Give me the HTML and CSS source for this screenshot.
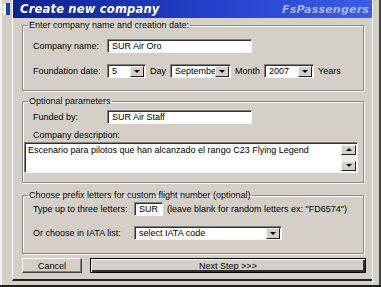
FILE: index.html
```html
<!DOCTYPE html>
<html>
<head>
<meta charset="utf-8">
<link rel="stylesheet" href="styles.css">
</head>
<body>
<div class="screen">
  <div class="side-left">
    <div class="app-icon"></div>
  </div>
  <div class="dialog">
    <div class="titlebar">
      <span class="title">Create new company</span>
      <span class="brand">FsPassengers</span>
    </div>
    <div class="body">
      <fieldset class="group g1">
        <legend>Enter company name and creation date:</legend>
        <div class="row r1">
          <span class="label w74">Company name:</span>
          <span class="input w145">SUR Air Oro</span>
        </div>
        <div class="row r2">
          <span class="label w74">Foundation date:</span>
          <span class="select w39"><span class="val">5</span><span class="arrow"></span></span>
          <span class="word">Day</span>
          <span class="select w61"><span class="val">Septembe</span><span class="arrow"></span></span>
          <span class="word">Month</span>
          <span class="select w50"><span class="val">2007</span><span class="arrow"></span></span>
          <span class="word">Years</span>
        </div>
      </fieldset>
      <fieldset class="group g2">
        <legend>Optional parameters</legend>
        <div class="row r3">
          <span class="label w74">Funded by:</span>
          <span class="input w145">SUR Air Staff</span>
        </div>
        <div class="row r4"><span class="label">Company description:</span></div>
        <div class="textarea">
          <span class="ta-text">Escenario para pilotos que han alcanzado el rango C23 Flying Legend</span>
          <span class="scroll">
            <span class="sbtn up"></span>
            <span class="sbtn down"></span>
          </span>
        </div>
      </fieldset>
      <fieldset class="group g3">
        <legend>Choose prefix letters for custom flight number (optional)</legend>
        <div class="row r5">
          <span class="label w101">Type up to three letters:</span>
          <span class="input w29">SUR</span>
          <span class="word">(leave blank for random letters ex: "FD6574")</span>
        </div>
        <div class="row r6">
          <span class="label w101">Or choose in IATA list:</span>
          <span class="select w148"><span class="val">select IATA code</span><span class="arrow"></span></span>
        </div>
      </fieldset>
      <div class="buttons">
        <span class="btn cancel">Cancel</span>
        <span class="btn next">Next Step &gt;&gt;&gt;</span>
      </div>
    </div>
  </div>
  <div class="side-right"></div>
</div>
</body>
</html>
```
FILE: styles.css
```css
* { box-sizing: border-box; }
html, body { margin: 0; padding: 0; background: #d4d0c8; }
.screen {
  width: 381px;
  height: 287px;
  display: flex;
  overflow: hidden;
  background: #d4d0c8;
  font-family: "Liberation Sans", Arial, sans-serif;
  font-size: 9px;
  color: #000;
  border-bottom: 2px solid #202020;
}
.side-left {
  width: 12px;
  border-left: 2px solid #f4f4f0;
  position: relative;
}
.app-icon {
  margin: 3px 0 0 1px;
  width: 7px;
  height: 12px;
  background: linear-gradient(to right, #f4f4f4 0 3px, #1f3fa8 3px);
  border-radius: 3px 0 0 3px;
}
.side-right {
  width: 9px;
  border-left: 1px solid #f4f4f0;
  border-right: 2px solid #404040;
  background: #d4d0c8;
}
.dialog {
  flex: 1;
  display: flex;
  flex-direction: column;
  border-left: 1px solid #ffffff;
  border-bottom: 2px solid #202020;
  margin-bottom: 4px;
}
.titlebar {
  height: 18px;
  flex: none;
  display: flex;
  align-items: center;
  justify-content: space-between;
  padding: 0 3px 0 7px;
  background: linear-gradient(to right, #0c2290 0%, #2540c8 55%, #3b5fe6 100%);
  font-family: "DejaVu Sans", sans-serif;
  font-weight: bold;
  font-style: italic;
  font-size: 11.5px;
  letter-spacing: 0.2px;
}
.title { color: #ffffff; }
.brand { color: #a3b3e4; font-size: 11px; }
.body {
  flex: 1;
  padding: 1px 8px 0 9px;
  display: flex;
  flex-direction: column;
}
.group {
  margin: 0;
  padding: 0 5px 0 10px;
  border: 1px solid #8c8a84;
  box-shadow: inset 1px 1px 0 #fbfbf8, 1px 1px 0 #fbfbf8;
  min-width: 0;
}
.group legend {
  padding: 0 1px;
  margin-left: -5px;
  line-height: 12px;
}
.g1 { padding-bottom: 12px; }
.g2 { margin-top: 4px; padding-bottom: 9px; }
.g3 { margin-top: 6px; padding-bottom: 13px; }
.row { display: flex; align-items: center; height: 14px; }
.r1 { margin-top: 8px; }
.r2 { margin-top: 11px; }
.r3 { margin-top: 3px; }
.r4 { margin-top: 5px; height: 12px; }
.r5 { margin-top: 1px; }
.r6 { margin-top: 10px; }
.label { flex: none; }
.w74 { width: 74px; }
.w101 { width: 101px; }
.word { margin: 0 4px; }
.input, .select {
  height: 14px;
  background: #fff;
  border: 1px solid;
  border-color: #808080 #f8f8f8 #f8f8f8 #808080;
  box-shadow: inset 1px 1px 0 #303030;
  padding: 1px 0 0 4px;
  line-height: 11px;
  flex: none;
}
.select { display: flex; padding-right: 1px; }
.select .val { flex: 1; overflow: hidden; white-space: nowrap; }
.select .arrow {
  width: 14px;
  height: 11px;
  background: #d4d0c8;
  border: 1px solid;
  border-color: #f4f4f4 #202020 #202020 #f4f4f4;
  position: relative;
}
.select .arrow::after, .sbtn::after {
  content: "";
  position: absolute;
  left: 50%;
  top: 50%;
  margin: -2px 0 0 -3px;
  border-left: 3px solid transparent;
  border-right: 3px solid transparent;
  border-top: 3px solid #000;
}
.w145 { width: 145px; }
.w39 { width: 39px; }
.w61 { width: 61px; }
.w50 { width: 50px; }
.w29 { width: 29px; }
.w148 { width: 148px; }
.textarea {
  margin: 1px 0 0 -9px;
  height: 31px;
  background: #fff;
  border: 1px solid;
  border-color: #808080 #f8f8f8 #f8f8f8 #808080;
  box-shadow: inset 1px 1px 0 #303030;
  display: flex;
  padding: 2px 1px 1px 3px;
}
.ta-text { flex: 1; line-height: 11px; white-space: nowrap; }
.scroll {
  width: 15px;
  display: flex;
  flex-direction: column;
  justify-content: space-between;
  background: #ecebe6;
}
.sbtn {
  height: 10px;
  background: #d4d0c8;
  border: 1px solid;
  border-color: #f4f4f4 #202020 #202020 #f4f4f4;
  position: relative;
}
.sbtn.up::after {
  border-top: none;
  border-bottom: 3px solid #000;
}
.buttons {
  margin-top: 4px;
  display: flex;
  gap: 8px;
  height: 15px;
}
.btn {
  display: flex;
  align-items: center;
  justify-content: center;
  background: #d4d0c8;
  border: 1px solid;
  border-color: #fbfbf8 #404040 #404040 #fbfbf8;
  box-shadow: inset -1px -1px 0 #808080;
}
.cancel { width: 60px; }
.next {
  flex: 1;
  margin-right: -2px;
  border: 1px solid #000;
  box-shadow: inset 1px 1px 0 #fbfbf8, inset -2px -2px 0 #303030;
}
```
